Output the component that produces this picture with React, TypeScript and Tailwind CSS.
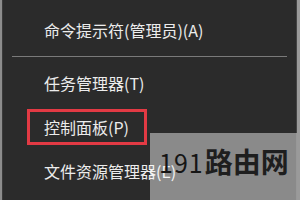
const items = [
  { label: '命令提示符(管理员)(A)' },
  { label: '任务管理器(T)', sepBefore: true },
  { label: '控制面板(P)', marked: true },
  { label: '文件资源管理器(E)' },
];

export default function App() {
  return (
    <div
      className="relative w-[300px] h-[200px] overflow-hidden bg-[#2b2b2b] flex"
      style={{ fontFamily: '"Noto Sans CJK SC", "Liberation Sans", sans-serif' }}
    >
      <div className="w-[2px] bg-[#8c8c8c]" />
      <div className="w-px bg-[#3a3a3a]" />
      <div className="flex-1 flex flex-col pt-[8px]">
        {items.map((it) => (
          <div key={it.label}>
            {it.sepBefore && <div className="mx-[9px] my-[4px] h-px bg-[#7a7a7a]" />}
            <div className="h-[44px] flex items-center pl-[41px]">
              <span
                className={
                  it.marked
                    ? 'border-[3px] border-[#e23a44] h-[36px] pl-[14px] pr-[15px] -ml-[17px] flex items-center text-[16px] text-[#ececec]'
                    : 'text-[16px] text-[#ececec]'
                }
              >
                {it.label}
              </span>
            </div>
          </div>
        ))}
      </div>
      <div className="w-px bg-[#444]" />
      <div className="w-[3px] bg-[#9a9a9a]" />

      {/* watermark */}
      <div className="absolute left-[150px] top-[133px] w-[147px] h-[67px] bg-white/45 flex items-end pl-[9px] pt-[14px]">
        <span className="self-start text-[28px] leading-none text-[#1e1e1e] font-bold">
          <span className="font-normal text-[25px] tracking-[1px] mr-[1px] text-[#151515]">191</span>路由网
        </span>
      </div>
    </div>
  );
}
